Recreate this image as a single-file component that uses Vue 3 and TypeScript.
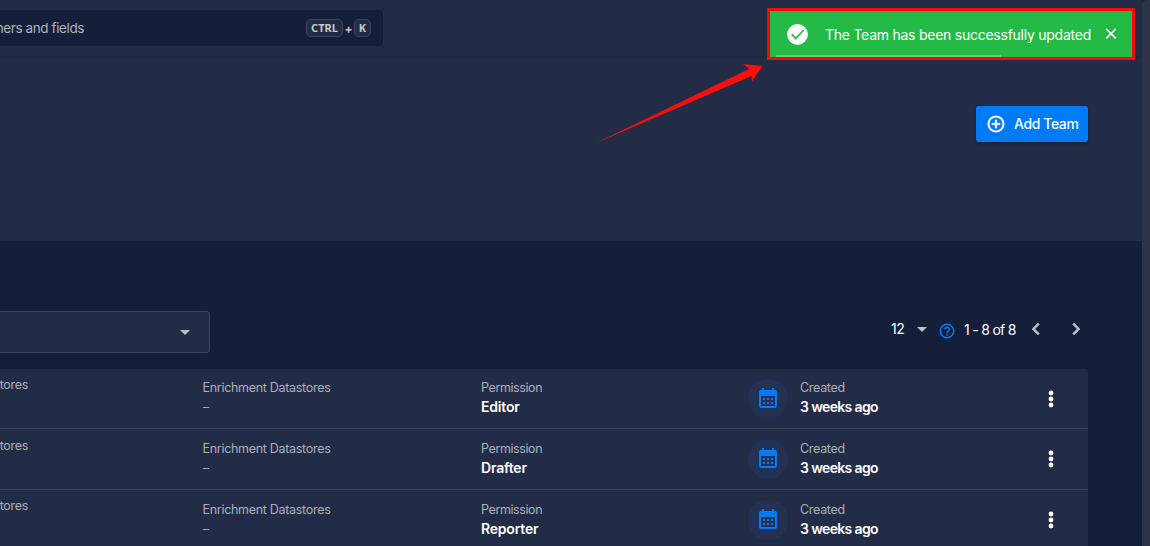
<script setup lang="ts">
interface TeamRow {
  permission: string
  created: string
  shift: string
}

const rows: TeamRow[] = [
  { permission: 'Editor', created: '3 weeks ago', shift: 'first' },
  { permission: 'Drafter', created: '3 weeks ago', shift: 'second' },
  { permission: 'Reporter', created: '3 weeks ago', shift: 'third' },
]
</script>

<template>
  <div class="screen">
    <main class="page">
      <header class="hero">
        <div class="topbar">
          <div class="search">
            <span class="query">ners and fields</span>
            <span class="keys"><kbd class="ctrl">CTRL</kbd><b>+</b><kbd class="k">K</kbd></span>
          </div>
        </div>
        <div class="actions">
          <button class="add">
            <svg width="20" height="20" viewBox="0 0 24 24" fill="#fff" stroke="#fff" stroke-width="0.4"><path d="M12 20a8 8 0 1 1 0-16 8 8 0 0 1 0 16m0-18a10 10 0 1 0 0 20 10 10 0 0 0 0-20m1 5h-2v4H7v2h4v4h2v-4h4v-2h-4z" /></svg>
            <span class="add-text">Add Team</span>
          </button>
        </div>
      </header>

      <section class="filters">
        <div class="select">
          <svg width="24" height="24" viewBox="0 0 24 24" fill="#bdc0c7"><path d="m7 10 5 5 5-5z" /></svg>
        </div>
        <div class="pager">
          <span class="size">12</span>
          <svg class="caret" width="24" height="24" viewBox="0 0 24 24" fill="#bdc0c7"><path d="m7 10 5 5 5-5z" /></svg>
          <svg class="help" width="18" height="18" viewBox="0 0 24 24" fill="#007bf5"><path d="M11 18h2v-2h-2zm1-16a10 10 0 1 0 0 20 10 10 0 0 0 0-20m0 18a8 8 0 1 1 0-16 8 8 0 0 1 0 16m0-14a4 4 0 0 0-4 4h2a2 2 0 1 1 4 0c0 2-3 1.750-3 5h2c0-2.250 3-2.500 3-5a4 4 0 0 0-4-4" /></svg>
          <span class="range">1 - 8 of 8</span>
          <svg class="prev" width="24" height="24" viewBox="0 0 24 24" fill="#bdc0c7" stroke="#bdc0c7" stroke-width="0.5"><path d="M15.410 16.580 10.830 12l4.580-4.590L14 6l-6 6 6 6z" /></svg>
          <svg class="next" width="24" height="24" viewBox="0 0 24 24" fill="#bdc0c7" stroke="#bdc0c7" stroke-width="0.5"><path d="M8.590 16.580 13.170 12 8.590 7.410 10 6l6 6-6 6z" /></svg>
        </div>
      </section>

      <section class="list">
        <article v-for="row in rows" :key="row.permission" class="row" :class="row.shift">
          <div class="cell stores"><span class="label l-cut">tores</span></div>
          <div class="cell enrich">
            <span class="label l-enrich">Enrichment Datastores</span>
            <span class="dash">–</span>
          </div>
          <div class="cell perm">
            <span class="label l-perm">Permission</span>
            <span class="value">{{ row.permission }}</span>
          </div>
          <div class="avatar">
            <svg width="24" height="24" viewBox="0 0 24 24" fill="#007bf5"><path d="M7 11h2v2H7zm14-6v14a2 2 0 0 1-2 2H5a2 2 0 0 1-2-2V5c0-1.100.9-2 2-2h1V1h2v2h8V1h2v2h1a2 2 0 0 1 2 2M5 19h14V9H5zm10-6v-2h2v2zm-4 0v-2h2v2zm-4 2h2v2H7zm8 2v-2h2v2zm-4 0v-2h2v2z" /></svg>
          </div>
          <div class="cell created">
            <span class="label l-created">Created</span>
            <span class="value v-created">{{ row.created }}</span>
          </div>
          <svg class="more" width="24" height="24" viewBox="0 0 24 24" fill="#fff"><circle cx="12" cy="6" r="2.400" /><circle cx="12" cy="12" r="2.400" /><circle cx="12" cy="18" r="2.400" /></svg>
        </article>
      </section>
    </main>
    <aside class="rail"></aside>

    <div class="toast">
      <svg class="check" width="25" height="25" viewBox="0 0 25 25"><circle cx="12.500" cy="12.500" r="10.400" fill="#fff" /><path d="m6.700 12.200 4 4.300 8-8.500" fill="none" stroke="#24ba46" stroke-width="1.700" /></svg>
      <span class="message">The Team has been successfully updated</span>
      <svg class="close" width="16" height="16" viewBox="0 0 16 16" fill="none" stroke="#fff" stroke-width="1.700"><path d="m3.300 3 9.400 9.400M12.700 3 3.300 12.400" /></svg>
      <i class="progress"></i>
    </div>
    <svg class="arrow" width="170" height="82" viewBox="595 62 170 82"><path d="M594 144 L749 69 L743.500 64 L762.500 66 L752 81.500 L751.500 76 Z" fill="#ff0d0d" /></svg>
  </div>
</template>

<style>
body {
  margin: 0;
  overflow: hidden;
  background: #151f39;
}
</style>

<style scoped>
* {
  box-sizing: border-box;
}
.screen {
  position: relative;
  display: flex;
  width: 1150px;
  height: 546px;
  overflow: hidden;
  font-family: Inter, "Noto Sans", sans-serif;
  color: #fff;
}
.screen svg {
  display: block;
  flex: none;
}
.page {
  width: 1142px;
  background: #151f39;
}
.rail {
  width: 8px;
  background: #2e3448;
  border-top-left-radius: 5px;
}
.hero {
  height: 241px;
  background: #232c46;
}
.topbar {
  height: 56px;
  padding-top: 10px;
  box-shadow: 0 1px 3px rgba(10, 16, 35, 0.22);
}
.search {
  display: flex;
  align-items: center;
  justify-content: space-between;
  width: 383px;
  height: 36px;
  padding-right: 12px;
  background: #151f39;
  border-radius: 0 4px 4px 0;
}
.query {
  display: flex;
  justify-content: flex-end;
  width: 84px;
  font-size: 13.5px;
  line-height: 20px;
  letter-spacing: -0.4px;
  white-space: nowrap;
  color: #b0b3bb;
}
.keys {
  display: flex;
  align-items: center;
  color: #c3c5cb;
}
.keys b {
  width: 11px;
  font-size: 12px;
  text-align: center;
}
.keys kbd {
  display: flex;
  align-items: center;
  justify-content: center;
  height: 18px;
  border: 1px solid #3e465c;
  border-radius: 5px;
  background: #232c46;
  font: 700 11px/16px "Noto Sans", sans-serif;
}
.ctrl {
  width: 37px;
}
.k {
  width: 17px;
}
.actions {
  display: flex;
  justify-content: flex-end;
  padding: 50px 54px 0 0;
}
.add {
  display: flex;
  align-items: center;
  gap: 8px;
  width: 112px;
  height: 36px;
  padding: 0 0 0 10px;
  border: 0;
  border-radius: 3px;
  background: #007bf5;
  box-shadow: 0 2px 3px rgba(0, 0, 0, 0.25);
  color: #fff;
  font: 500 14px/20px Inter, sans-serif;
  letter-spacing: -0.4px;
  white-space: nowrap;
}
.filters {
  display: flex;
  justify-content: space-between;
  height: 128px;
  padding: 70px 54px 0 0;
}
.select {
  display: flex;
  align-items: center;
  justify-content: flex-end;
  width: 210px;
  height: 42px;
  padding-right: 12px;
  border: 1px solid #3c445b;
  border-left: 0;
  border-radius: 0 4px 4px 0;
  background: #232c46;
}
.pager {
  display: flex;
  align-items: center;
  height: 36px;
  font-size: 14px;
  line-height: 20px;
  white-space: nowrap;
}
.size {
  width: 20px;
  padding-left: 1px;
  letter-spacing: -0.4px;
}
.pager .help {
  margin: 3px 0 0 4px;
}
.range {
  width: 52px;
  margin: 2px 8px 0 8px;
  letter-spacing: -0.7px;
}
.pager .next {
  margin-left: 16px;
}
.list {
  width: 1088px;
  overflow: hidden;
  border-top-right-radius: 4px;
  background: #232c46;
}
.row {
  display: grid;
  grid-template-columns: 202px 279px 267px 52px 239px 24px;
  height: 61px;
  border-bottom: 1px solid #3c445b;
}
.row.first {
  height: 60px;
}
.cell {
  display: flex;
  flex-direction: column;
  padding-top: 11px;
}
.first .cell {
  padding-top: 10px;
}
.row .stores {
  align-items: flex-end;
  width: 28px;
  padding-top: 7px;
}
.row.second .stores {
  padding-top: 8px;
}
.label {
  font-size: 12.5px;
  line-height: 18px;
  letter-spacing: -0.3px;
  white-space: nowrap;
  color: #abafb8;
}
.l-enrich {
  padding-left: 0.5px;
}
.l-perm {
  letter-spacing: -0.4px;
}
.value {
  font-size: 14px;
  font-weight: 600;
  line-height: 20px;
  letter-spacing: -0.2px;
  white-space: nowrap;
}
.v-created {
  letter-spacing: -0.65px;
}
.dash {
  padding-left: 1px;
  font-size: 12px;
  line-height: 20px;
  color: #a7abb5;
}
.avatar {
  display: flex;
  align-items: center;
  justify-content: center;
  width: 40px;
  height: 40px;
  margin-top: 10px;
  padding-right: 1px;
  border-radius: 50%;
  background: #233254;
}
.more {
  margin-top: 18px;
}
.toast {
  position: absolute;
  top: 8px;
  left: 767px;
  display: flex;
  align-items: center;
  width: 368px;
  height: 52px;
  padding-left: 15px;
  border: 3px solid #f90808;
  background: #24ba46;
}
.message {
  width: 268px;
  margin: 2px 10px 0 15px;
  font-size: 14px;
  line-height: 20px;
  letter-spacing: -0.25px;
  white-space: nowrap;
}
.progress {
  position: absolute;
  left: 6px;
  bottom: 0;
  width: 225px;
  height: 2px;
  background: #60cf79;
}
.arrow {
  position: absolute;
  top: 62px;
  left: 595px;
}
</style>
